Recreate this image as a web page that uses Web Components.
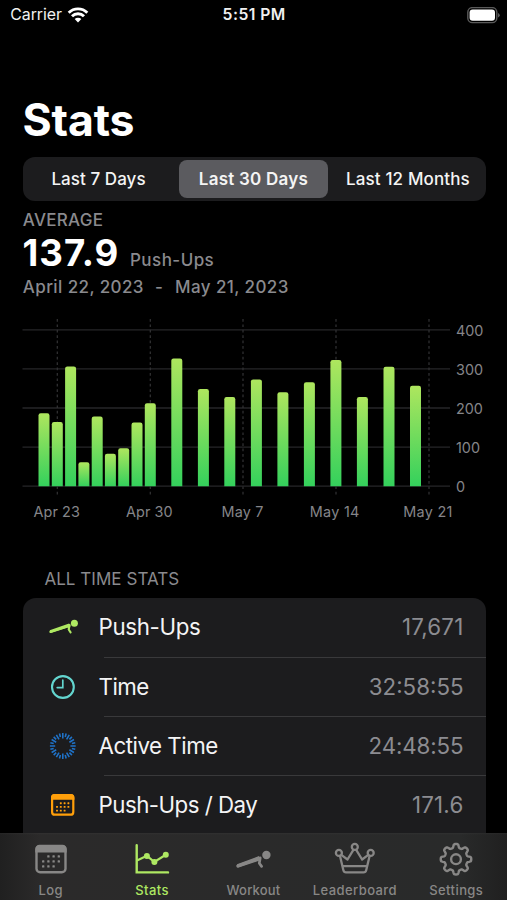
<!DOCTYPE html>
<html lang="en">
<head>
<meta charset="utf-8">
<title>Stats</title>
<style>
html,body{margin:0;height:100%;background:#000}
body{font-family:Inter,"Liberation Sans",sans-serif;overflow:hidden;color:#fff}
</style>
</head>
<body>
<stats-app></stats-app>

<template id="t-status">
<style>
:host{display:grid;grid-template-columns:1fr auto 1fr;align-items:center;height:30px;padding:0 7px 0 10.3px;box-sizing:border-box;font-size:15.9px;line-height:20px;color:#f0f0f0}
.l{display:flex;align-items:center;gap:5px;letter-spacing:-.07px}
.t{font-weight:600;letter-spacing:.45px;font-size:15.7px;transform:translateX(-1px)}
.r{display:flex;justify-content:flex-end}
svg{display:block}
</style>
<div class="l"><span>Carrier</span>
<svg width="22" height="16" viewBox="0 0 22 16" fill="none" stroke="#fff" stroke-width="2.9"><path d="M1.7 5.7a13.2 13.2 0 0 1 18.6 0"/><path d="M5 9.2a8.5 8.5 0 0 1 12 0"/><path d="M11 15.4 7.7 12.1a4.7 4.7 0 0 1 6.6 0z" fill="#fff" stroke="none"/></svg></div>
<div class="t">5:51 PM</div>
<div class="r"><svg width="33" height="17" viewBox="0 0 33 17"><rect x=".8" y=".6" width="29" height="15" rx="4.6" fill="none" stroke="#5a5a5a" stroke-width="1.4"/><rect x="2.6" y="2.5" width="25.4" height="11.2" rx="3" fill="#fff"/><path d="M31 5.9q1.8.9 1.8 2.3T31 10.5z" fill="#5a5a5a"/></svg></div>
</template>

<template id="t-seg">
<style>
:host{display:grid;grid-template-columns:156.5px 149px 1fr;height:43.4px;box-sizing:border-box;border-radius:12px;background:#1c1c1e;padding:2.5px 0;font-size:17px;font-weight:500;line-height:38px;text-align:center;color:#f4f4f4}
::slotted(*){display:block;white-space:nowrap}
::slotted([selected]){background:#5b5b5f;border-radius:8px;font-weight:600}
</style>
<slot></slot>
</template>

<template id="t-sum">
<style>
:host{display:flex;flex-direction:column;color:#8a8a8e;font-size:17px;font-weight:500;white-space:nowrap}
.a{letter-spacing:.28px;line-height:24px}
.v{display:flex;line-height:42px;height:42px}
b{font-size:36.6px;font-weight:700;letter-spacing:1.05px;color:#fff;margin-left:-.4px;width:107.6px}
.u{letter-spacing:.45px;line-height:56.4px}
.d{display:flex;line-height:26px;letter-spacing:.4px}
.d span:nth-child(2){width:20.2px;margin-left:11px}
</style>
<div class="a"><slot name="title"></slot></div>
<div class="v"><b><slot name="value"></slot></b><span class="u"><slot name="unit"></slot></span></div>
<div class="d"><span><slot name="from"></slot></span><span>-</span><span><slot name="to"></slot></span></div>
</template>

<template id="t-row">
<style>
:host{display:flex;align-items:center;height:59.2px;box-sizing:border-box;padding:0 22px 0 20.5px;font-size:22.3px;line-height:30px;color:#f4f4f5;position:relative;white-space:nowrap}
:host(:not(:first-child))::before{content:"";position:absolute;left:81.5px;right:0;top:-.4px;height:1px;background:#39393b}
app-icon{width:40px;height:40px;margin-right:15.5px}
.v{margin-left:auto;color:#8c8c91;letter-spacing:var(--vs,0)}
.n{letter-spacing:var(--ns,0)}
</style>
<app-icon></app-icon><span class="n"></span><span class="v"></span>
</template>

<template id="t-tab">
<style>
:host{display:flex;flex-direction:column;align-items:center;width:101.4px;color:#888786;font-size:13px;font-weight:500;line-height:18px}
:host([active]){color:#aee862}
app-icon{width:44px;height:40px;margin-top:6px}
span{margin-top:2.2px;letter-spacing:var(--ls,.42px);white-space:nowrap}
</style>
<app-icon></app-icon><span><slot></slot></span>
</template>

<template id="t-app">
<style>
:host{display:flex;flex-direction:column;height:900px;width:507px;background:#000;overflow:hidden}
h1{margin:64.7px 0 0 22.5px;font-size:44.6px;line-height:50px;font-weight:700;letter-spacing:-.16px;height:62.8px;flex:none}
segment-bar,stat-list{margin:0 21.5px 0 22.5px}
segment-bar,status-bar,tab-bar,stat-summary,bar-chart{flex:none}
stat-summary{margin:7.3px 0 0 22.8px}
bar-chart{margin-top:10.2px}
.h{margin:37px 0 0 44.4px;font-size:17px;line-height:24px;letter-spacing:.05px;color:#8a8a8e;flex:none}
stat-list{margin-top:6.5px;flex:1;min-height:0}
</style>
<status-bar></status-bar>
<h1>Stats</h1>
<segment-bar><span style="letter-spacing:.06px;padding-right:4.4px">Last 7 Days</span><span selected style="letter-spacing:.24px">Last 30 Days</span><span style="letter-spacing:.14px;padding-left:2.4px">Last 12 Months</span></segment-bar>
<stat-summary><span slot="title">AVERAGE</span><span slot="value">137.9</span><span slot="unit">Push-Ups</span><span slot="from">April 22, 2023</span><span slot="to">May 21, 2023</span></stat-summary>
<bar-chart></bar-chart>
<div class="h">ALL TIME STATS</div>
<stat-list>
<stat-row icon="pushup" name="Push-Ups" value="17,671" color="#aee862" style="--ns:-.33px;--vs:.22px"></stat-row>
<stat-row icon="clock" name="Time" value="32:58:55" color="#63d5cf" style="--ns:-.5px"></stat-row>
<stat-row icon="rays" name="Active Time" value="24:48:55" color="#1f72c8" style="--ns:-.48px;--vs:-.1px"></stat-row>
<stat-row icon="calendar" name="Push-Ups / Day" value="171.6" color="#ff9f0a" style="--ns:-.52px;--vs:.22px"></stat-row>
</stat-list>
<tab-bar>
<tab-item icon="log">Log</tab-item><tab-item icon="chart" active>Stats</tab-item><tab-item icon="workout" style="--ls:.2px">Workout</tab-item><tab-item icon="crown">Leaderboard</tab-item><tab-item icon="gear">Settings</tab-item>
</tab-bar>
</template>

<script>
const mount = (el, id) => {
  const root = el.attachShadow({mode: 'open'});
  root.append(document.getElementById(id).content.cloneNode(true));
  return root;
};

const dots = (cols, rows, s, skip) => {
  let out = '';
  rows.forEach((y, r) => cols.forEach((x, c) => {
    if (!skip.includes(r + ',' + c)) out += `<rect x="${x - s / 2}" y="${y - s / 2}" width="${s}" height="${s}" rx=".4"/>`;
  }));
  return out;
};
const rays = () => {
  let out = '';
  for (let i = 0; i < 24; i++) {
    const a = i * Math.PI / 12, inner = i % 2 ? 9.4 : 7.6;
    out += `M${19.8 + inner * Math.sin(a)} ${20 - inner * Math.cos(a)}L${19.8 + 12.9 * Math.sin(a)} ${20 - 12.9 * Math.cos(a)}`;
  }
  return out;
};
const gear = () => {
  const pts = [];
  for (let i = 0; i <= 160; i++) {
    const a = i * Math.PI / 80;
    const w = Math.tanh(2.2 * Math.cos(8 * a));
    const r = 13.4 + 1.9 * w;
    pts.push(`${(22 + r * Math.sin(a)).toFixed(2)} ${(20.2 - r * Math.cos(a)).toFixed(2)}`);
  }
  return 'M' + pts.join('L') + 'Z';
};
const ICONS = {
  pushup: ['0 0 40 40', '<path d="M7.2 24.7 26 18.4 26.6 18Z" stroke-width="3"/><path d="M7.4 24.9 25.6 19.2" stroke-width="2.2"/><path d="M26.6 18 25.7 22.5 27.6 25.3" stroke-width="2.1" stroke-linejoin="round"/><circle cx="31.4" cy="16.3" r="3.5" fill="currentColor" stroke="none"/>'],
  clock: ['0 0 40 40', '<circle cx="19.9" cy="20" r="10.9" stroke-width="2.1"/><path d="M19.8 13.2v7.4h-5.6" stroke-width="1.7"/>'],
  rays: ['0 0 40 40', `<path stroke-width="1.6" stroke-linecap="butt" d="${rays()}"/>`],
  calendar: ['0 0 40 40', `<rect x="9.1" y="10.1" width="21.2" height="19.6" rx="2.8" stroke-width="2.2"/><path d="M8 14.8V12.5a3.5 3.5 0 0 1 3.5-3.5h16.4a3.5 3.5 0 0 1 3.5 3.5v2.3z" fill="currentColor" stroke="none"/><g fill="currentColor" stroke="none">${dots([14, 17.8, 21.6, 25.4], [18.2, 21.9, 25.6], 1.9, ['0,0', '2,3'])}</g>`],
  log: ['0 0 44 40', `<rect x="7.5" y="7.1" width="29" height="26.2" rx="3.6" stroke-width="2.4"/><path d="M6.3 13.6V10a4.2 4.2 0 0 1 4.2-4.2h23a4.2 4.2 0 0 1 4.2 4.2v3.6z" fill="currentColor" stroke="none"/><g fill="currentColor" stroke="none">${dots([14.2, 19.4, 24.6, 29.8], [17.4, 22.4, 27.4], 2.3, ['0,0', '2,3'])}</g>`],
  chart: ['0 0 44 40', '<path d="M6.7 6.3V33.4H38" stroke-width="2.4"/><path d="M7.5 21.2 16.9 16.8 24.4 23 35.8 15.8" stroke-width="2.2"/><g fill="currentColor" stroke="none"><circle cx="16.9" cy="17" r="3"/><circle cx="24.4" cy="23" r="3"/><circle cx="35.8" cy="15.8" r="3"/></g>'],
  workout: ['0 0 44 40', '<path d="M6.6 26.9 28.6 18.8Z" stroke-width="3.6"/><path d="M7 27 28 19.9" stroke-width="3.4"/><path d="M29.2 18.9 28.3 24.2 30.6 27.4" stroke-width="2.7" stroke-linejoin="round"/><circle cx="35.4" cy="16" r="4.2" fill="currentColor" stroke="none"/>'],
  crown: ['0 0 44 40', '<g stroke-width="2.3" stroke-linejoin="round"><circle cx="5.9" cy="13.9" r="3"/><circle cx="21.8" cy="7.9" r="3"/><circle cx="37.7" cy="13.9" r="3"/><path d="M7 16.9 10.4 31.2Q10.9 33.3 13 33.3H30.6Q32.7 33.3 33.2 31.2L36.6 16.9"/><path d="M8.3 15.9 14.5 20.5 20.4 10.9M35.3 15.9 29.1 20.5 23.2 10.9M10.1 27.2H33.5"/></g>'],
  gear: ['0 0 44 40', `<path stroke-width="2.4" stroke-linejoin="round" d="${gear()}"/><circle cx="22" cy="20.2" r="4.9" stroke-width="2.4"/>`]
};

customElements.define('app-icon', class extends HTMLElement {
  constructor() { super(); this.attachShadow({mode: 'open'}); }
  set name(n) {
    const [box, body] = ICONS[n];
    this.shadowRoot.innerHTML = `<style>:host{display:block;flex:none}svg{display:block;width:100%;height:100%;overflow:visible}</style><svg viewBox="${box}" fill="none" stroke="currentColor" stroke-linecap="round">${body}</svg>`;
  }
});
for (const [tag, id] of [['status-bar', 't-status'], ['segment-bar', 't-seg'], ['stat-summary', 't-sum']])
  customElements.define(tag, class extends HTMLElement { connectedCallback() { if (!this.shadowRoot) mount(this, id); } });

customElements.define('stat-row', class extends HTMLElement {
  connectedCallback() {
    const r = mount(this, 't-row'), icon = r.querySelector('app-icon');
    customElements.upgrade(icon);
    icon.name = this.getAttribute('icon');
    icon.style.color = this.getAttribute('color');
    r.querySelector('.n').textContent = this.getAttribute('name');
    r.querySelector('.v').textContent = this.getAttribute('value');
  }
});
customElements.define('stat-list', class extends HTMLElement {
  connectedCallback() {
    this.attachShadow({mode: 'open'}).innerHTML = '<style>:host{display:flex;flex-direction:column;background:#1c1c1e;border-radius:13px 13px 0 0;overflow:hidden}::slotted(*){flex:none}</style><slot></slot>';
  }
});
customElements.define('tab-bar', class extends HTMLElement {
  connectedCallback() {
    this.attachShadow({mode: 'open'}).innerHTML = '<style>:host{display:flex;height:67px;background:linear-gradient(#ffffff08,#0000 2px),linear-gradient(90deg,#202020,#2b2a2a 40px,#292a2a 460px,#202020)}</style><slot></slot>';
  }
});
customElements.define('tab-item', class extends HTMLElement {
  connectedCallback() {
    const r = mount(this, 't-tab'), icon = r.querySelector('app-icon');
    customElements.upgrade(icon);
    icon.name = this.getAttribute('icon');
  }
});

customElements.define('bar-chart', class extends HTMLElement {
  connectedCallback() {
    const top = 310, base = 486.2;
    const bars = [[44, 413.3], [57.3, 422], [70.6, 366.6], [83.9, 462.3], [97.2, 416.6], [110.4, 453.8], [123.7, 448.2], [137, 422.6], [150.3, 403.2], [176.8, 358.5], [203.4, 389], [229.8, 397.1], [256.4, 379.4], [282.9, 392.3], [309.4, 382.2], [335.9, 360], [362.4, 397], [389, 366.7], [415.5, 385.7]];
    let s = '';
    [329.8, 368.9, 408, 447.1, 486.2].forEach((y, i) => {
      s += `<line x1="22.5" x2="450" y1="${y}" y2="${y}" stroke="#262628" stroke-width="1.3"/>`;
      s += `<text x="456" y="${y + 5.7}">${400 - 100 * i}</text>`;
    });
    [[57.3, 'Apr 23', .06, 33.6], [150.3, 'Apr 30', .1, 126], [243, 'May 7', .2, 221.5], [336, 'May 14', .3, 309.7], [429, 'May 21', .3, 403.3]].forEach(([x, t, ls, tx]) => {
      s += `<line x1="${x}" x2="${x}" y1="319" y2="495" stroke="#333335" stroke-width="1.2" stroke-dasharray="2.7 2.7"/>`;
      s += `<text x="${tx}" y="516.6" letter-spacing="${ls}">${t}</text>`;
    });
    for (const [x, y] of bars) {
      const l = x - 5.5, r = x + 5.5;
      s += `<path fill="url(#g)" d="M${l} ${base}V${y + 2.2}Q${l} ${y} ${l + 2.2} ${y}H${r - 2.2}Q${r} ${y} ${r} ${y + 2.2}V${base}Z"/>`;
    }
    this.attachShadow({mode: 'open'}).innerHTML = `<style>:host{display:block;height:220px}svg{display:block}text{font-size:14.4px;fill:#858589}</style><svg width="507" height="220" viewBox="0 ${top} 507 220"><defs><linearGradient id="g" x2="0" y2="1"><stop offset="0" stop-color="#aee65e"/><stop offset="1" stop-color="#34d15c"/></linearGradient></defs>${s}</svg>`;
  }
});
customElements.define('stats-app', class extends HTMLElement { connectedCallback() { mount(this, 't-app'); } });
</script>
</body>
</html>
